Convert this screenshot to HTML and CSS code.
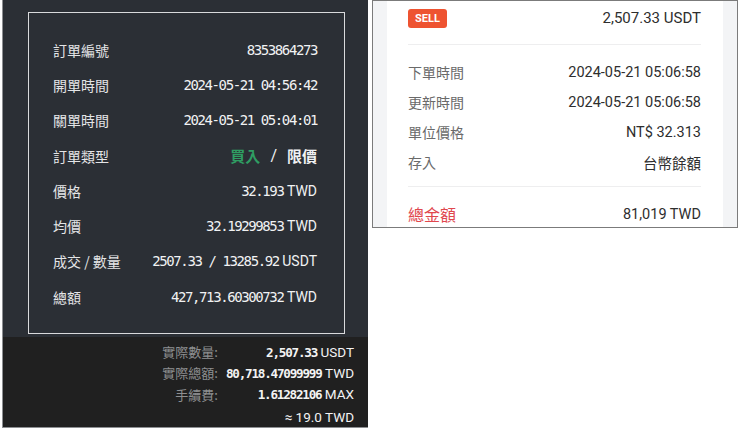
FILE: index.html
```html
<!DOCTYPE html>
<html lang="zh-Hant">
<head>
<meta charset="utf-8">
<link rel="stylesheet" href="styles.css">
</head>
<body>
<div class="page">
  <section class="dark-panel">
    <div class="dark-top">
      <div class="order-box">
        <div class="row"><span class="lbl">訂單編號</span><span class="val mono">8353864273</span></div>
        <div class="row"><span class="lbl">開單時間</span><span class="val mono">2024-05-21 04:56:42</span></div>
        <div class="row"><span class="lbl">關單時間</span><span class="val mono">2024-05-21 05:04:01</span></div>
        <div class="row"><span class="lbl">訂單類型</span><span class="val type"><b class="buy">買入</b><span class="slash">/</span><b>限價</b></span></div>
        <div class="row"><span class="lbl">價格</span><span class="val"><span class="mono">32.193</span> <span class="unit">TWD</span></span></div>
        <div class="row"><span class="lbl">均價</span><span class="val"><span class="mono">32.19299853</span> <span class="unit">TWD</span></span></div>
        <div class="row"><span class="lbl">成交 / 數量</span><span class="val"><span class="mono">2507.33 / 13285.92</span> <span class="unit">USDT</span></span></div>
        <div class="row"><span class="lbl">總額</span><span class="val"><span class="mono">427,713.60300732</span> <span class="unit">TWD</span></span></div>
      </div>
    </div>
    <div class="dark-bottom">
      <span class="blbl">實際數量:</span><span class="bval"><b class="mono">2,507.33</b> <span class="unit">USDT</span></span>
      <span class="blbl">實際總額:</span><span class="bval"><b class="mono">80,718.47099999</b> <span class="unit">TWD</span></span>
      <span class="blbl">手續費:</span><span class="bval"><b class="mono">1.61282106</b> <span class="unit">MAX</span></span>
      <span class="blbl"></span><span class="bval approx"><span class="unit">≈ 19.0 TWD</span></span>
    </div>
  </section>
  <section class="light-panel">
    <div class="card">
      <div class="head">
        <span class="badge">SELL</span>
        <span class="head-val">2,507.33 USDT</span>
      </div>
      <div class="divider"></div>
      <div class="list">
        <div class="lrow"><span class="llbl">下單時間</span><span class="lval">2024-05-21 05:06:58</span></div>
        <div class="lrow"><span class="llbl">更新時間</span><span class="lval">2024-05-21 05:06:58</span></div>
        <div class="lrow"><span class="llbl">單位價格</span><span class="lval">NT$ 32.313</span></div>
        <div class="lrow"><span class="llbl">存入</span><span class="lval">台幣餘額</span></div>
      </div>
      <div class="divider second"></div>
      <div class="lrow total"><span class="tlbl">總金額</span><span class="lval">81,019 TWD</span></div>
    </div>
  </section>
</div>
</body>
</html>
```

FILE: styles.css
```css
* { box-sizing: border-box; }
html, body { margin: 0; padding: 0; background: #ffffff; }
body {
  width: 740px;
  height: 432px;
  overflow: hidden;
  font-family: Roboto, "Noto Sans CJK TC", sans-serif;
}
.page {
  display: flex;
  align-items: flex-start;
  padding-left: 2px;
}
.mono {
  font-family: "DejaVu Sans Mono", "Noto Sans CJK TC", monospace;
}

/* ---------- dark panel ---------- */
.dark-panel {
  width: 366px;
  height: 428px;
  display: flex;
  flex-direction: column;
  border-left: 1px solid #8d8f92;
  border-bottom: 1px solid #8d8f92;
  background: #202020;
}
.dark-top {
  height: 337px;
  background: #2b2f35;
  padding: 12px 23px 3px 25px;
}
.order-box {
  height: 322px;
  border: 1.5px solid #d9dadc;
  padding: 19px 27px 0 24px;
  display: flex;
  flex-direction: column;
}
.row {
  height: 35.3px;
  display: flex;
  align-items: center;
  justify-content: space-between;
}
.lbl {
  font-family: "Noto Sans CJK TC", sans-serif;
  font-size: 14px;
  color: #e4e5e7;
}
.val {
  color: #f1f2f3;
  font-size: 14px;
  white-space: pre;
}
.val .mono, .val.mono {
  font-size: 14px;
  letter-spacing: -1.4px;
}
.unit {
  font-family: Roboto, sans-serif;
  font-size: 14px;
  letter-spacing: 0;
}
.type {
  font-family: "Noto Sans CJK TC", sans-serif;
  font-size: 15px;
  display: flex;
  align-items: center;
}
.type b { font-weight: 700; }
.type .buy { color: #2f9e63; }
.type .slash {
  margin: 0 10px;
  font-family: Roboto, sans-serif;
  font-size: 16px;
  color: #f1f2f3;
}
.dark-bottom {
  flex: 1;
  display: grid;
  grid-template-columns: 1fr auto;
  grid-auto-rows: 21.3px;
  align-items: center;
  column-gap: 8px;
  padding: 4px 14px 0 0;
}
.blbl {
  text-align: right;
  font-family: "Noto Sans CJK TC", sans-serif;
  font-size: 13px;
  color: #8e8f91;
}
.bval {
  text-align: right;
  color: #f3f3f3;
  font-size: 13.5px;
  white-space: pre;
}
.bval b {
  font-weight: 700;
  font-size: 12.6px;
  letter-spacing: -1.2px;
}
.bval .unit { font-size: 13.5px; }
.approx { padding-top: 2px; }

/* ---------- light panel ---------- */
.light-panel {
  margin-left: 4px;
  width: 366px;
  height: 228px;
  border: 1px solid #7b7b7b;
  background: #f3f4f6;
  padding: 0 14px 0 14px;
  overflow: hidden;
}
.card {
  background: #ffffff;
  height: 100%;
  padding: 7px 22px 0 21px;
}
.head {
  height: 20px;
  display: flex;
  align-items: center;
  justify-content: space-between;
}
.badge {
  background: #ee5331;
  color: #ffffff;
  font-family: Roboto, sans-serif;
  font-weight: 700;
  font-size: 11px;
  line-height: 19px;
  height: 19px;
  padding: 0 7px;
  border-radius: 3px;
}
.head-val {
  font-size: 15px;
  color: #2e2e2e;
}
.divider {
  height: 1px;
  background: #eeeeef;
  margin-top: 16px;
}
.divider.second { margin-top: 9px; }
.list { padding-top: 12px; }
.lrow {
  height: 30px;
  display: flex;
  align-items: center;
  justify-content: space-between;
}
.llbl {
  font-family: "Noto Sans CJK TC", sans-serif;
  font-size: 14px;
  color: #6a6a6a;
}
.lval {
  font-family: Roboto, "Noto Sans CJK TC", sans-serif;
  font-size: 14.5px;
  color: #2e2e2e;
}
.total { margin-top: 12px; }
.tlbl {
  font-family: "Noto Sans CJK TC", sans-serif;
  font-size: 16px;
  color: #e0474d;
}
```
